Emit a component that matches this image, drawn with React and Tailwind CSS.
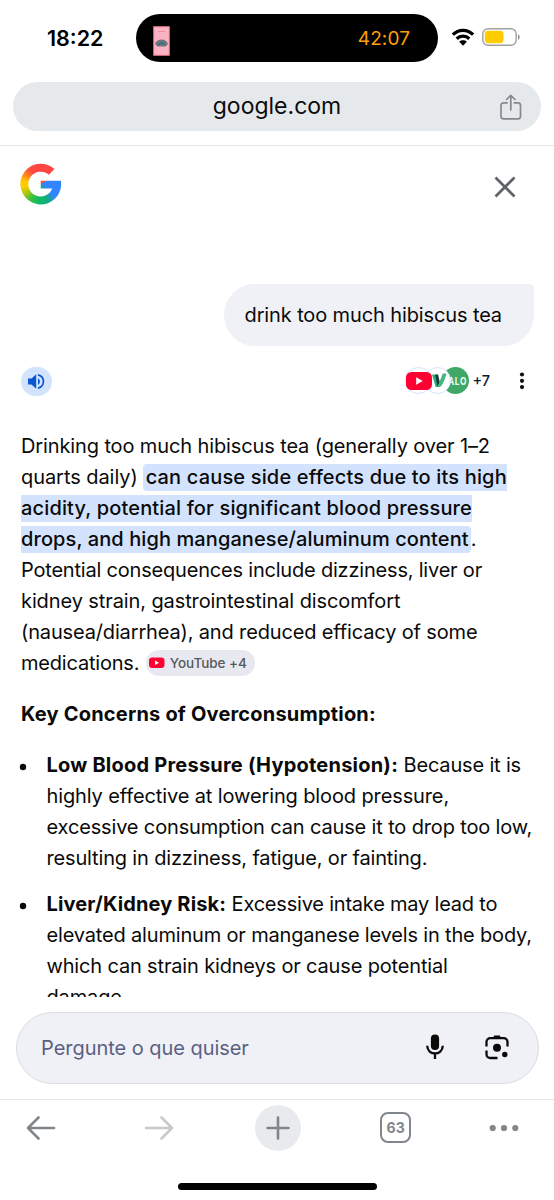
function StatusBar() {
  return (
    <header className="flex h-[82px] shrink-0 items-start pt-[14px]">
      <div className="w-[136px] pl-[47px] pt-2 text-[21.5px] leading-8 font-semibold text-black">18:22</div>
      <div className="flex h-12 w-[302px] items-center justify-between rounded-full bg-black pr-[28px] pl-[17px]">
        <svg className="mt-[5px]" width="17" height="30" viewBox="0 0 17 30">
          <rect x="0.75" y="0.75" width="15.5" height="28.5" fill="#fbb3c3" stroke="#ef7e8b" />
          <path d="M5 5.5h7" stroke="#ee8f9e" strokeWidth="1" />
          <path d="M2 18c1.500-6 11.500-6 13 0l-2.500 2.500h-8z" fill="#70747d" />
          <path d="M5 19l3.500-2.500L12 19" stroke="#2f6e75" strokeWidth="1.200" fill="none" />
        </svg>
        <span className="pt-px text-[19px] leading-6 tracking-[0.100px] text-[#ff9f0a]">42:07</span>
      </div>
      <svg className="mt-[13.500px] ml-[13px]" width="24" height="19" viewBox="0 0 24 19">
        <g fill="none" stroke="#000" strokeWidth="3.300">
          <path d="M1.900 6.700C7.500 1 16.500 1 22.100 6.700" />
          <path d="M5.700 10.700c3.500-3.400 9.100-3.400 12.600 0" />
        </g>
        <path d="M8.200 13.700c2.200-1.900 5.400-1.900 7.600 0L12 17.700z" fill="#000" />
      </svg>
      <svg className="mt-[14px] ml-[7px]" width="39" height="18" viewBox="0 0 39 18">
        <rect x="0.800" y="0.800" width="33.400" height="16.400" rx="5.200" fill="#fff" stroke="#a0a0a2" strokeWidth="1.400" />
        <rect x="2.800" y="2.800" width="18.700" height="12.400" rx="3.400" fill="#ffcc00" />
        <path d="M36 6.200c2.200.9 2.200 4.700 0 5.600z" fill="#909092" />
      </svg>
    </header>
  );
}

function AddressBar() {
  return (
    <div className="flex h-16 shrink-0 items-start border-b border-[#e4e5e7] px-[13px]">
      <div className="grid h-[49px] w-full grid-cols-[60px_1fr_60px] items-center rounded-full bg-[#e6e9ec]">
        <span />
        <span className="pb-[2px] text-center text-[23px] leading-8 text-[#0c0c0d]">google.com</span>
        <svg className="ml-[17px]" width="26" height="28" viewBox="0 0 26 28" fill="none" stroke="#85898d" strokeWidth="1.700" strokeLinecap="round" strokeLinejoin="round">
          <path d="M9.200 9.800H5.500a2.500 2.500 0 0 0-2.500 2.500v11a2.500 2.500 0 0 0 2.500 2.500h14.500a2.500 2.500 0 0 0 2.500-2.500v-11a2.500 2.500 0 0 0-2.500-2.500h-3.700" />
          <path d="M12.800 17V2.500M8.600 6.500l4.200-4.200 4.200 4.200" />
        </svg>
      </div>
    </div>
  );
}

function GoogleLogo() {
  return (
    <svg width="42" height="42" viewBox="0 0 42 42">
      <defs>
        <clipPath id="g-shape">
          <path d="M34.500 6A20.400 20.400 0 1 0 40.900 17.800H20.700v7.800h11.500A12.400 12.400 0 1 1 28.900 11.800z" />
        </clipPath>
      </defs>
      <foreignObject x="0" y="0" width="42" height="42" clipPath="url(#g-shape)">
        <div className="size-[42px] bg-[conic-gradient(from_0deg_at_50%_50%,#ff4640_0deg,#ff4640_60deg,#3186ff_60deg,#3186ff_130deg,#12ad83_158deg,#0ebc5f_190deg,#3dc040_215deg,#a8c811_238deg,#ffcc00_262deg,#ffc800_280deg,#ff7f20_303deg,#ff4641_325deg,#ff4640_360deg)]" />
      </foreignObject>
    </svg>
  );
}

function YouTube({ className }) {
  return (
    <svg className={className} viewBox="0 0 26 18">
      <rect width="26" height="18" rx="5.500" fill="#ff0033" />
      <path d="M10.200 5.200v7.600l6.600-3.800z" fill="#fff" />
    </svg>
  );
}

function Sources() {
  return (
    <div className="flex items-center">
      <div className="z-20 flex size-[27px] items-center justify-center rounded-full border border-[#d3e3fd]">
        <YouTube className="h-[18px] w-[26px] shrink-0" />
      </div>
      <div className="z-10 -ml-[8.500px] flex size-[27px] items-center justify-center rounded-full border border-[#d3e3fd] bg-white pl-[3px]">
        <svg width="16" height="15" viewBox="0 0 17 16">
          <path d="M1 1.500h4.500l3 9.500-1.500 4H5z" fill="#31a774" />
          <path d="M4.500 1.500h3l1.800 8-2.300 5.500z" fill="#123b38" />
          <path d="M16.500.5h-4L7 15h2.500C13 12 15 6 16.500.5z" fill="#45b67e" />
        </svg>
      </div>
      <div className="-ml-[9px] flex size-[27px] items-center justify-end rounded-full bg-[#3fa866] pr-[2px]">
        <span className="origin-right scale-x-[.76] text-[11px] leading-3 font-bold tracking-[0.800px] text-[#e8fff0]">ALO</span>
      </div>
      <span className="ml-[3.500px] text-[14.500px] leading-5 font-medium text-[#0a1a33]">+7</span>
      <svg className="ml-[28px]" width="8" height="18" viewBox="0 0 8 18" fill="#111">
        <circle cx="4" cy="2.500" r="2.100" />
        <circle cx="4" cy="8.800" r="2.100" />
        <circle cx="4" cy="15.100" r="2.100" />
      </svg>
    </div>
  );
}

function Bullet({ children }) {
  return (
    <li className="flex">
      <svg className="mt-[13px] mr-[19px] -ml-[2px] shrink-0" width="8" height="8" viewBox="0 0 8 8">
        <circle cx="4" cy="4" r="3.200" fill="#0a0a0a" />
      </svg>
      <div className="pl-[0.500px]">{children}</div>
    </li>
  );
}

const highlight = "flex h-[26.500px] items-center bg-[#d3e3fd] font-medium";

function Answer() {
  return (
    <main className="flex h-[567px] flex-col overflow-hidden pl-[21px] text-[20px] leading-[30.900px] whitespace-nowrap text-[#0a0a0a]">
      <div className="pt-[1.300px]">
        <p className="tracking-[-0.120px]">Drinking too much hibiscus tea (generally over 1–2</p>
        <p className="flex h-[30.900px] items-center">
          <span className="tracking-[-0.060px]">quarts daily)</span>
          <span className={`${highlight} ml-[5px] rounded-l-[4px] pl-[3px] tracking-[0.160px]`}>can cause side effects due to its high</span>
        </p>
        <p className="flex h-[30.900px] items-center">
          <span className={`${highlight} tracking-[0.150px]`}>acidity, potential for significant blood pressure</span>
        </p>
        <p className="flex h-[30.900px] items-center">
          <span className={`${highlight} rounded-r-[4px] pr-[2px] tracking-[0.090px]`}>drops, and high manganese/aluminum content</span>
          <span>.</span>
        </p>
        <p className="tracking-[-0.200px]">Potential consequences include dizziness, liver or</p>
        <p className="tracking-[-0.100px]">kidney strain, gastrointestinal discomfort</p>
        <p className="tracking-[-0.150px]">(nausea/diarrhea), and reduced efficacy of some</p>
        <p className="flex h-[30.900px] items-center">
          <span className="tracking-[-0.200px]">medications.</span>
          <span className="ml-[7px] flex h-[26px] w-[109px] items-center rounded-full bg-[#e8e9f0] pl-[3px] text-[13.500px] leading-5 font-medium tracking-[-0.050px] text-[#55585e]">
            <YouTube className="mr-[5px] h-[11.500px] w-[15.500px]" />
            YouTube +4
          </span>
        </p>
      </div>
      <h2 className="mt-[20.700px] font-bold tracking-[0.200px]">Key Concerns of Overconsumption:</h2>
      <ul className="mt-[20.200px] flex flex-col gap-[15.200px]">
        <Bullet>
          <p>
            <b className="font-bold tracking-[0.220px]">Low Blood Pressure (Hypotension):</b>
            <span className="tracking-[-0.170px]"> Because it is</span>
          </p>
          <p className="tracking-[-0.120px]">highly effective at lowering blood pressure,</p>
          <p className="tracking-[-0.150px]">excessive consumption can cause it to drop too low,</p>
          <p className="tracking-[-0.160px]">resulting in dizziness, fatigue, or fainting.</p>
        </Bullet>
        <Bullet>
          <p>
            <b className="font-bold tracking-[0.150px]">Liver/Kidney Risk:</b>
            <span className="tracking-[-0.210px]"> Excessive intake may lead to</span>
          </p>
          <p className="tracking-[-0.170px]">elevated aluminum or manganese levels in the body,</p>
          <p className="tracking-[-0.160px]">which can strain kidneys or cause potential</p>
          <p className="tracking-[-0.150px]">damage.</p>
        </Bullet>
      </ul>
    </main>
  );
}

function Composer() {
  return (
    <div className="flex h-[102px] shrink-0 items-start px-[15.500px] pt-[15px]">
      <div className="flex h-[72px] w-full items-center rounded-full border border-[#dcdde4] bg-[#f0f1f6] pl-[24.500px]">
        <span className="flex-1 pb-px text-[20px] leading-7 tracking-[-0.040px] text-[#5a6084]">Pergunte o que quiser</span>
        <svg className="mr-[39px] mb-[2px]" width="20" height="26" viewBox="0 0 20 26">
          <rect x="5.900" y="0.500" width="8.200" height="15.500" rx="4.100" fill="#0a0a0a" />
          <path d="M2.200 11.800c.3 10.200 15.300 10.200 15.600 0M10 19.500V25" stroke="#0a0a0a" strokeWidth="2.300" fill="none" />
        </svg>
        <svg className="mr-[28px] mb-[2px]" width="26" height="26" viewBox="0 0 26 26">
          <g fill="none" stroke="#0a0a0a" strokeWidth="2.300">
            <path d="M2.500 12.500V8a3.800 3.800 0 0 1 3.800-3.800h13.400A3.800 3.800 0 0 1 23.500 8v4.500" />
            <path d="M2.500 16.500v3.700A3.800 3.800 0 0 0 6.300 24h7.200" />
          </g>
          <path d="M8.700 4.500l1.500-3h5.600l1.500 3z" fill="#0a0a0a" />
          <circle cx="13" cy="13.800" r="4" fill="#0a0a0a" />
          <circle cx="20.800" cy="20.500" r="2.700" fill="#0a0a0a" />
        </svg>
      </div>
    </div>
  );
}

function BottomBar() {
  return (
    <footer className="flex flex-1 flex-col items-center border-t border-[#e4e5e7]">
      <div className="flex h-[55px] w-full items-center justify-between pr-[35.500px] pl-[26px]">
        <svg width="30" height="24" viewBox="0 0 30 24" fill="none" stroke="#80868b" strokeWidth="2.600" strokeLinecap="round" strokeLinejoin="round">
          <path d="M28 12H2M12.500 1.500L2 12l10.500 10.500" />
        </svg>
        <svg className="ml-[11px]" width="30" height="24" viewBox="0 0 30 24" fill="none" stroke="#c6c8ca" strokeWidth="2.600" strokeLinecap="round" strokeLinejoin="round">
          <path d="M2 12h26M17.500 1.500L28 12 17.500 22.500" />
        </svg>
        <span className="ml-[3px] flex size-[46px] items-center justify-center rounded-full bg-[#e9eaed]">
          <svg width="24" height="24" viewBox="0 0 24 24" fill="none" stroke="#80868b" strokeWidth="2.600" strokeLinecap="round">
            <path d="M1.500 12h21M12 1.500v21" />
          </svg>
        </span>
        <span className="ml-[2px] flex size-[31px] items-center justify-center rounded-[8px] border-[2.500px] border-[#80868b] text-[14px] font-bold text-[#80868b]">63</span>
        <svg width="30" height="8" viewBox="0 0 30 8" fill="#80868b">
          <circle cx="3.700" cy="4" r="3.100" />
          <circle cx="15" cy="4" r="3.100" />
          <circle cx="26.300" cy="4" r="3.100" />
        </svg>
      </div>
      <div className="mt-[28px] h-[6.500px] w-[199px] rounded-full bg-black" />
    </footer>
  );
}

export default function App() {
  return (
    <div className="flex h-[1200px] w-[554px] flex-col overflow-hidden bg-white font-['Inter','Liberation_Sans',sans-serif]">
      <StatusBar />
      <AddressBar />
      <div className="flex h-[138px] shrink-0 items-start justify-between pt-[17px] pr-[36px] pl-[20px]">
        <GoogleLogo />
        <svg className="mt-[11px]" width="26" height="26" viewBox="0 0 26 26" stroke="#5f6368" strokeWidth="2.700">
          <path d="M3.500 3.500l19 19M22.500 3.500l-19 19" />
        </svg>
      </div>
      <div className="flex h-[62px] shrink-0 justify-end pr-[20.500px]">
        <div className="flex w-[309.500px] items-center rounded-[31px] rounded-tr-[5px] bg-[#f0f1f6] pl-[20.500px] text-[20px] leading-7 tracking-[-0.120px] text-[#0a0a0a]">
          drink too much hibiscus tea
        </div>
      </div>
      <div className="flex h-[84px] shrink-0 items-start justify-between pt-[21px] pr-[28px] pl-[20.500px]">
        <span className="flex h-[28.500px] w-[31px] items-center justify-center rounded-full bg-[#d3e3fd]">
          <svg width="18" height="17" viewBox="0 0 18 17" fill="#0b57d0">
            <path d="M1 5.500h3.500L9.200 1.300v14.400l-4.700-4.200H1z" />
            <path d="M11 5.200c2.500 1.500 2.500 5.100 0 6.600z" />
            <path d="M11 1.900c7.200 1.600 7.200 11.600 0 13.200" fill="none" stroke="#0b57d0" strokeWidth="1.700" />
          </svg>
        </span>
        <Sources />
      </div>
      <Answer />
      <Composer />
      <BottomBar />
    </div>
  );
}
